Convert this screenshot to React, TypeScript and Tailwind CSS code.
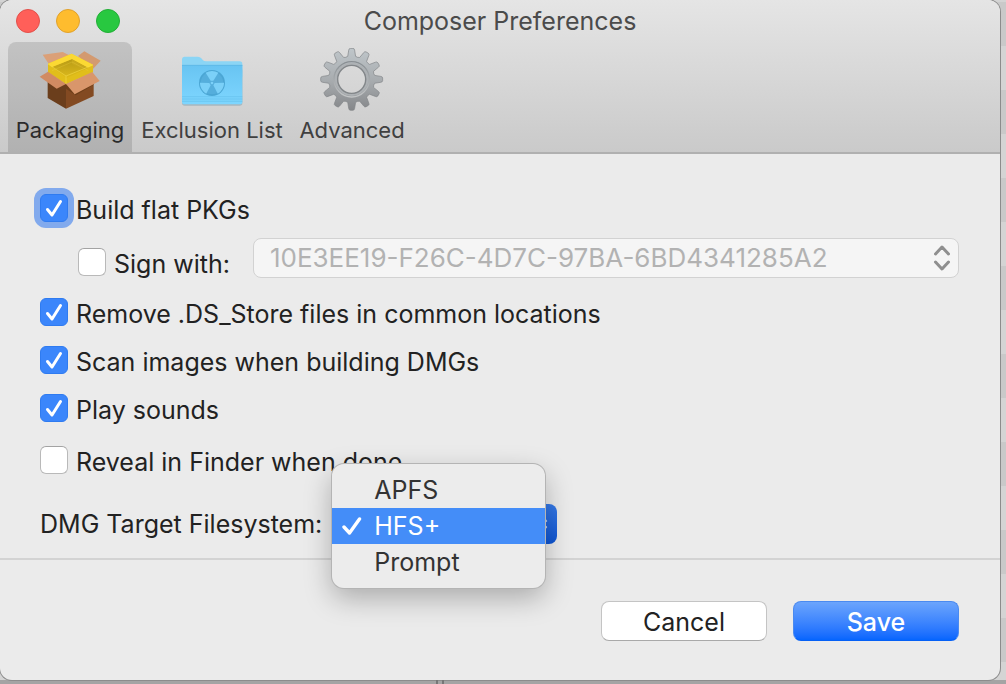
import { useState } from 'react';
import type { ReactNode } from 'react';

const FILESYSTEMS = ['APFS', 'HFS+', 'Prompt'];

const TEETH = 12;

// outline of the gear, tooth by tooth, round 0,0
function gearPath() {
  const root = 70;
  const tip = 93;
  const step = (Math.PI * 2) / TEETH;
  const point = (r: number, a: number) => `${(r * Math.sin(a)).toFixed(1)} ${(-r * Math.cos(a)).toFixed(1)}`;
  let d = '';
  for (let i = 0; i < TEETH; i++) {
    const a = i * step;
    d += `${i === 0 ? 'M' : 'L'}${point(root, a - 0.17)} L${point(tip - 5, a - 0.1)} Q${point(tip, a - 0.09)} ${point(tip, a - 0.04)} `;
    d += `L${point(tip, a + 0.04)} Q${point(tip, a + 0.09)} ${point(tip - 5, a + 0.1)} L${point(root, a + 0.17)} `;
    d += `Q${point(root - 3, a + step / 2)} ${point(root, a + step - 0.17)} `;
  }
  return d + 'Z M44 0 A44 44 0 1 0 -44 0 A44 44 0 1 0 44 0 Z';
}

function BoxIcon() {
  return (
    <svg viewBox="0 0 192 192" className="size-16" aria-hidden="true">
      <defs>
        <linearGradient id="inside" x1="0" y1="0" x2="0" y2="1">
          <stop offset="0" stopColor="#b89b16" />
          <stop offset="1" stopColor="#dcb91c" />
        </linearGradient>
      </defs>
      {/* back flaps */}
      <path d="M14 20 L74 12 L94 22 L34 50 Z" fill="#dba078" />
      <path d="M120 24 L139 10 L188 38 L164 64 Z" fill="#d39a70" />
      {/* carton */}
      <path d="M29 94 L84 108 L84 182 L29 150 Z" fill="#6b3e1c" />
      <path d="M84 108 L167 88 L167 144 L84 182 Z" fill="#834a22" />
      <path d="M84 122 L84 112 L167 88 L167 110 L113 142 Z" fill="#54300f" opacity="0.45" />
      {/* yellow lining */}
      <path d="M30 47 L101 17 L165 50 L165 73 L84 108 L30 73 Z" fill="#ecc824" />
      <path d="M42 57 L102 33 L151 59 L86 90 Z" fill="url(#inside)" />
      <path d="M102 33 L151 59 L138 66 L102 48 Z" fill="#c8a81c" />
      <path d="M30 47 L101 17 L165 50 L151 59 L102 33 L42 57 Z" fill="#fbd933" />
      <path d="M30 49 L84 84 L165 52 L165 73 L84 108 L30 73 Z" fill="#dcb815" opacity="0.65" />
      <path d="M30 48 L84 84 L165 51 M84 84 V108" fill="none" stroke="#f7df50" strokeWidth="2" opacity="0.8" />
      <path d="M42 68 L102 42 L151 68" fill="none" stroke="#f3d84a" strokeWidth="1.5" opacity="0.5" />
      {/* front flaps */}
      <path d="M30 71 L84 108 L56 122 L5 86 Z" fill="#d18b62" />
      <path d="M84 108 L163 72 L185 99 L110 139 Z" fill="#d9966b" />
    </svg>
  );
}

function FolderIcon() {
  return (
    <svg viewBox="30 12 192 192" className="size-16" aria-hidden="true">
      <defs>
        <linearGradient id="folder" x1="0" y1="0" x2="0" y2="1">
          <stop offset="0" stopColor="#68c4f2" />
          <stop offset="1" stopColor="#7ed6ff" />
        </linearGradient>
      </defs>
      <rect x="36" y="70" width="181" height="115" rx="8" fill="#8aa5b3" opacity="0.6" />
      <path d="M36 47 Q36 38 44 38 H84 Q90 38 94 43 L99 49 Q102 52 108 52 H209 Q217 52 217 60 V100 H36 Z" fill="#8bd5f5" />
      <path d="M36 63 H217 V173 Q217 181 209 181 H44 Q36 181 36 173 Z" fill="url(#folder)" />
      <path d="M36 64 H217" stroke="#59b5e3" strokeWidth="2" />
      <path d="M36 158 H217 M36 165 H217 M36 172 H217" stroke="#5cb9e6" strokeWidth="2" opacity="0.7" />
      <circle cx="126" cy="117" r="39" fill="#4ba6d4" />
      <circle cx="126" cy="117" r="34" fill="#55aedc" />
      <path d="M122 110 L107 86 Q126 76 145 86 L130 110 Z" fill="#7bd0f8" />
      <path d="M122 110 L107 86 Q126 76 145 86 L130 110 Z" fill="#7bd0f8" transform="rotate(120 126 117)" />
      <path d="M122 110 L107 86 Q126 76 145 86 L130 110 Z" fill="#7bd0f8" transform="rotate(240 126 117)" />
      <circle cx="126" cy="117" r="4" fill="#7bd0f8" />
    </svg>
  );
}

function GearIcon() {
  return (
    <svg viewBox="-95 -94 192 192" className="size-16" aria-hidden="true">
      <defs>
        <linearGradient id="gear" x1="0" y1="0" x2="0" y2="1">
          <stop offset="0" stopColor="#bfc6ca" />
          <stop offset="0.5" stopColor="#a9adb0" />
          <stop offset="1" stopColor="#85878a" />
        </linearGradient>
        <linearGradient id="rim" x1="0" y1="0" x2="0" y2="1">
          <stop offset="0" stopColor="#888e92" />
          <stop offset="1" stopColor="#c3c5c6" />
        </linearGradient>
      </defs>
      <path d={gearPath()} fill="url(#gear)" fillRule="evenodd" stroke="#7e8285" strokeWidth="2" />
      <circle r="53" fill="none" stroke="url(#rim)" strokeWidth="4" />
      <circle r="47" fill="none" stroke="#adb1b4" strokeWidth="6" />
      <circle r="42" fill="none" stroke="#828689" strokeWidth="4" />
    </svg>
  );
}

interface TabProps {
  label: string;
  icon: ReactNode;
  className: string;
  active: boolean;
  onClick: () => void;
}

function Tab({ label, icon, className, active, onClick }: TabProps) {
  return (
    <button
      type="button"
      onClick={onClick}
      className={`flex flex-col items-center rounded-t-lg pt-1.5 pb-1 text-[22px] leading-9 whitespace-nowrap ${active ? 'bg-black/12 text-[#2b2b2b]' : 'text-[#404040]'} ${className}`}
    >
      {icon}
      <span>{label}</span>
    </button>
  );
}

interface CheckProps {
  label: string;
  defaultChecked?: boolean;
  focused?: boolean;
  className?: string;
}

function Check({ label, defaultChecked = false, focused = false, className = '' }: CheckProps) {
  return (
    <label className={`flex h-7 items-center gap-2 whitespace-nowrap ${className}`}>
      <span className="grid size-7 shrink-0">
        <input
          type="checkbox"
          defaultChecked={defaultChecked}
          className={`peer col-start-1 row-start-1 size-7 appearance-none rounded-md border border-[#b9b9b9] border-t-[#a3a3a3] bg-white outline-none checked:border-[#2f7bf0] checked:bg-[#3b86fb] ${focused ? 'ring-6 ring-[#82aaed]' : ''}`}
        />
        <svg viewBox="0 0 28 28" className="pointer-events-none invisible col-start-1 row-start-1 size-7 peer-checked:visible" aria-hidden="true">
          <path d="M7.5 15.5 L12 21 L20.5 7.5" fill="none" stroke="#fff" strokeWidth="3" strokeLinecap="round" strokeLinejoin="round" />
        </svg>
      </span>
      <span className="pt-1">{label}</span>
    </label>
  );
}

function UpDown({ className }: { className: string }) {
  return (
    <svg viewBox="0 0 18 26" className={className} fill="none" stroke="currentColor" strokeWidth="3" strokeLinecap="round" strokeLinejoin="round" aria-hidden="true">
      <path d="M2.5 9 L9 2 L15.5 9 M2.5 17 L9 24 L15.5 17" />
    </svg>
  );
}

export default function App() {
  const [tab, setTab] = useState('Packaging');
  const [filesystem, setFilesystem] = useState('HFS+');

  return (
    <div className="flex min-h-screen flex-col bg-[#a4a4a4] font-['Inter','Liberation_Sans',sans-serif] text-[25px] leading-7 text-[#222]">
      <div className="flex flex-1 flex-col bg-[repeating-linear-gradient(to_bottom,#d4d4d4_0px,#d4d4d4_2px,#c9c9c9_2px,#c9c9c9_46px,#d4d4d4_46px,#d4d4d4_88px)] pr-1.5">
        <main className="flex flex-1 flex-col overflow-hidden rounded-xl bg-[#ebebeb] shadow-[0_0_0_1px_#8c8c8c]">
          <header className="border-b-2 border-[#b0b0b0] bg-linear-to-b from-[#e5e5e5] to-[#cacaca]">
            <div className="grid h-[42px] grid-cols-[1fr_auto_1fr] items-center px-4">
              <div className="flex gap-4">
                <button type="button" aria-label="Close" className="size-6 rounded-full border border-[#e2504a] bg-[#ff5f59]" />
                <button type="button" aria-label="Minimize" className="size-6 rounded-full border border-[#e0a12c] bg-[#febc2e]" />
                <button type="button" aria-label="Zoom" className="size-6 rounded-full border border-[#23ae37] bg-[#28c840]" />
              </div>
              <h1 className="text-[#4b4b4b]">Composer Preferences</h1>
            </div>
            <nav className="flex px-2">
              <Tab label="Packaging" icon={<BoxIcon />} className="w-[124px]" active={tab === 'Packaging'} onClick={() => setTab('Packaging')} />
              <Tab label="Exclusion List" icon={<FolderIcon />} className="w-[160px]" active={tab === 'Exclusion List'} onClick={() => setTab('Exclusion List')} />
              <Tab label="Advanced" icon={<GearIcon />} className="w-[120px]" active={tab === 'Advanced'} onClick={() => setTab('Advanced')} />
            </nav>
          </header>

          <form className="flex flex-col" onSubmit={e => e.preventDefault()}>
            <div className="flex flex-col items-start px-10 pt-10">
              <Check label="Build flat PKGs" defaultChecked focused />
              <div className="mt-4 flex w-full items-end gap-[23px] pr-px pl-[38px]">
                <Check label="Sign with:" className="mb-0.5" />
                <div className="grid h-10 flex-1 items-center">
                  <select
                    disabled
                    aria-label="Signing identity"
                    className="col-start-1 row-start-1 h-10 w-full appearance-none rounded-lg border border-[#d2d2d2] bg-[#f5f5f5] px-4 text-[26px] text-[#b2b2b2] opacity-100"
                  >
                    <option>10E3EE19-F26C-4D7C-97BA-6BD4341285A2</option>
                  </select>
                  <UpDown className="pointer-events-none col-start-1 row-start-1 mr-2 h-[26px] w-[18px] justify-self-end text-[#8f8f8f]" />
                </div>
              </div>
              <Check label="Remove .DS_Store files in common locations" defaultChecked className="mt-5" />
              <Check label="Scan images when building DMGs" defaultChecked className="mt-5" />
              <Check label="Play sounds" defaultChecked className="mt-5" />
              <Check label="Reveal in Finder when done" className="mt-6" />

              <div className="mt-[30px] flex items-center gap-2.5">
                <label htmlFor="filesystem" className="whitespace-nowrap">DMG Target Filesystem:</label>
                <div className="relative grid h-10 w-[225px] items-center">
                  <select
                    id="filesystem"
                    value={filesystem}
                    onChange={e => setFilesystem(e.target.value)}
                    className="col-start-1 row-start-1 h-10 w-full appearance-none rounded-lg bg-linear-to-b from-[#3579e8] to-[#0d55d3] px-4 text-white"
                  >
                    {FILESYSTEMS.map(name => (
                      <option key={name}>{name}</option>
                    ))}
                  </select>
                  <UpDown className="pointer-events-none col-start-1 row-start-1 mr-2 h-5 w-4 justify-self-end text-[#b9d1f7]" />
                  {/* open menu, laid over the select */}
                  <ul className="absolute -top-10 left-0 w-[213px] rounded-xl bg-[#ececec] pt-2 pb-2 shadow-[0_0_0_1px_#b4b4b4,0_10px_28px_rgba(0,0,0,0.28)]">
                    {FILESYSTEMS.map(name => (
                      <li key={name}>
                        <button
                          type="button"
                          onClick={() => setFilesystem(name)}
                          className={`flex h-9 w-full items-center pl-2.5 ${name === filesystem ? 'bg-[#448df8] text-white' : 'text-[#333]'}`}
                        >
                          <svg viewBox="0 0 20 20" className="mr-3 size-5" fill="none" stroke="currentColor" strokeWidth="3.4" strokeLinecap="round" strokeLinejoin="round" aria-hidden="true">
                            {name === filesystem && <path d="M2 11 L7.5 17 L17.5 3" />}
                          </svg>
                          {name}
                        </button>
                      </li>
                    ))}
                  </ul>
                </div>
              </div>
            </div>

            <div className="mt-3.5 flex justify-end gap-[26px] border-t-2 border-[#d3d3d3] px-[41px] pt-[41px] pb-9">
              <button type="button" className="h-10 w-[166px] rounded-lg border border-[#c4c4c4] border-b-[#a9a9a9] bg-white pt-0.5">Cancel</button>
              <button type="submit" className="h-10 w-[166px] rounded-lg border border-[#4a8af0] border-b-[#0560f5] bg-linear-to-b from-[#6ba4fc] to-[#0465fe] pt-0.5 font-medium text-white">Save</button>
            </div>
          </form>
        </main>
      </div>
      <div className="flex h-1 shrink-0 pl-[436px]">
        <div className="w-2 border-x-2 border-[#777]" />
      </div>
    </div>
  );
}
